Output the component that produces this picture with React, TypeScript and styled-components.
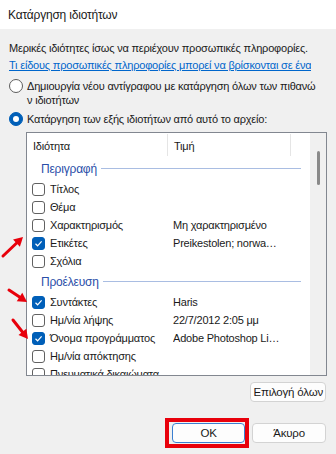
import styled, { createGlobalStyle } from "styled-components";

const GlobalStyle = createGlobalStyle`
  html, body {
    margin: 0;
    padding: 0;
    background: #f0f0f0;
  }
  body {
    font-family: "Liberation Sans", Arial, sans-serif;
    font-size: 11px;
    letter-spacing: -0.2px;
    line-height: 16px;
    color: #1a1a1a;
  }
`;

const Dialog = styled.div`
  position: relative;
  width: 336px;
  height: 454px;
  overflow: hidden;
  background: #f0f0f0;
`;

const TitleBar = styled.div`
  height: 29px;
  line-height: 30px;
  padding-left: 8px;
  background: #ffffff;
  font-size: 12px;
  color: #1a1a1a;
`;

const Content = styled.div`
  display: flex;
  flex-direction: column;
  padding: 11px 10px 0 9px;
`;

const Intro = styled.div`
  line-height: 16px;
  white-space: nowrap;
`;

const Link = styled.a`
  display: block;
  margin-top: 1px;
  line-height: 16px;
  color: #0066cc;
  text-decoration: underline;
  white-space: nowrap;
  overflow: hidden;
  width: 302px;
`;

const Option = styled.div<{ $top: number }>`
  display: flex;
  align-items: flex-start;
  gap: 4px;
  margin-top: ${({ $top }) => $top}px;
  line-height: 14px;
  white-space: nowrap;
`;

const Radio = styled.span<{ $on?: boolean }>`
  flex: none;
  box-sizing: border-box;
  width: 14px;
  height: 14px;
  border-radius: 50%;
  display: flex;
  align-items: center;
  justify-content: center;
  background: ${({ $on }) => ($on ? "#005fb8" : "#ffffff")};
  border: 1px solid ${({ $on }) => ($on ? "#005fb8" : "#5c5c5c")};
  &::after {
    content: "";
    display: ${({ $on }) => ($on ? "block" : "none")};
    width: 6px;
    height: 6px;
    border-radius: 50%;
    background: #ffffff;
  }
`;

const ListBox = styled.div`
  position: relative;
  display: flex;
  margin: 6px 0 0 17px;
  width: 301px;
  height: 244px;
  box-sizing: border-box;
  border: 1px solid #828790;
  background: #ffffff;
  overflow: hidden;
`;

const ListBody = styled.div`
  flex: 1;
  display: flex;
  flex-direction: column;
  overflow: hidden;
`;

const Scrollbar = styled.div`
  flex: none;
  width: 16px;
  background: #f0f0f0;
  display: flex;
  justify-content: center;
  padding-top: 18px;
  box-sizing: border-box;
`;

const Thumb = styled.div`
  width: 3px;
  height: 34px;
  border-radius: 2px;
  background: #8a8a8a;
`;

const HeaderRow = styled.div`
  display: grid;
  grid-template-columns: 141px 123px 1fr;
  height: 24px;
  flex: none;
`;

const HeaderCell = styled.div<{ $sep?: boolean }>`
  padding-left: 6px;
  line-height: 24px;
  border-right: ${({ $sep }) => ($sep ? "1px solid #e5e5e5" : "none")};
  margin-top: 1px;
  height: 22px;
`;

const GroupRow = styled.div`
  flex: none;
  height: 23px;
  display: flex;
  align-items: center;
  gap: 4px;
  padding: 0 9px 0 14px;
  color: #2a4ea8;
  font-size: 12px;
  &::after {
    content: "";
    flex: 1;
    height: 1px;
    background: #a9bde2;
  }
`;

const Row = styled.div`
  flex: none;
  height: 18px;
  display: grid;
  grid-template-columns: 146px 1fr;
  align-items: center;
  white-space: nowrap;
`;

const NameCell = styled.div`
  display: flex;
  align-items: center;
  gap: 5px;
  padding-left: 5px;
  overflow: hidden;
`;

const ValueCell = styled.div`
  overflow: hidden;
`;

const Check = styled.span<{ $on?: boolean }>`
  flex: none;
  box-sizing: border-box;
  width: 13px;
  height: 13px;
  border-radius: 3px;
  display: flex;
  align-items: center;
  justify-content: center;
  background: ${({ $on }) => ($on ? "#005fb8" : "#ffffff")};
  border: 1px solid ${({ $on }) => ($on ? "#005fb8" : "#616161")};
`;

const SelectAllRow = styled.div`
  display: flex;
  justify-content: flex-end;
  margin-top: 6px;
`;

const Button = styled.button<{ $primary?: boolean }>`
  box-sizing: border-box;
  height: 20px;
  padding: 0 2px;
  font-family: inherit;
  font-size: 11.5px;
  letter-spacing: inherit;
  line-height: 16px;
  color: #1a1a1a;
  background: #fdfdfd;
  border: 1px solid ${({ $primary }) => ($primary ? "#3a7fd0" : "#d3d3d3")};
  border-radius: 4px;
  cursor: pointer;
`;

const ActionRow = styled.div`
  display: flex;
  justify-content: flex-end;
  align-items: center;
  gap: 3px;
  margin-top: 16px;
`;

const Highlight = styled.span`
  display: inline-flex;
  border: 4px solid #e8000b;
  padding: 1px 0 1px 3px;
`;

const Arrow = styled.svg`
  position: absolute;
  left: 0;
  top: 0;
  overflow: visible;
`;

type Item = { name: string; value?: string; checked?: boolean };

const groups: { title: string; items: Item[] }[] = [
  {
    title: "Περιγραφή",
    items: [
      { name: "Τίτλος" },
      { name: "Θέμα" },
      { name: "Χαρακτηρισμός", value: "Μη χαρακτηρισμένο" },
      { name: "Ετικέτες", value: "Preikestolen; norwa…", checked: true },
      { name: "Σχόλια" },
    ],
  },
  {
    title: "Προέλευση",
    items: [
      { name: "Συντάκτες", value: "Haris", checked: true },
      { name: "Ημ/νία λήψης", value: "22/7/2012 2:05 μμ" },
      { name: "Όνομα προγράμματος", value: "Adobe Photoshop Li…", checked: true },
      { name: "Ημ/νία απόκτησης" },
      { name: "Πνευματικά δικαιώματα" },
    ],
  },
];

const Tick = () => (
  <svg width="9" height="9" viewBox="0 0 9 9">
    <path d="M1.5 4.8 L3.6 6.8 L7.6 2.4" fill="none" stroke="#fff" strokeWidth="1.2" />
  </svg>
);

// annotation arrow, tail (x1,y1) -> tip (x2,y2)
const RedArrow = ({ x1, y1, x2, y2 }: { x1: number; y1: number; x2: number; y2: number }) => {
  const a = Math.atan2(y2 - y1, x2 - x1);
  const len = 9;
  const w = 5;
  const bx = x2 - Math.cos(a) * len;
  const by = y2 - Math.sin(a) * len;
  const px = -Math.sin(a) * w;
  const py = Math.cos(a) * w;
  return (
    <Arrow width="1" height="1">
      <line x1={x1} y1={y1} x2={bx + Math.cos(a)} y2={by + Math.sin(a)} stroke="#e8000b" strokeWidth="3" strokeLinecap="round" />
      <polygon points={`${x2},${y2} ${bx + px},${by + py} ${bx - px},${by - py}`} fill="#e8000b" />
    </Arrow>
  );
};

export default function App() {
  return (
    <Dialog>
      <GlobalStyle />
      <TitleBar>Κατάργηση ιδιοτήτων</TitleBar>
      <Content>
        <Intro>Μερικές ιδιότητες ίσως να περιέχουν προσωπικές πληροφορίες.</Intro>
        <Link href="#">Τι είδους προσωπικές πληροφορίες μπορεί να βρίσκονται σε ένα αρχείο;</Link>
        <Option $top={6}>
          <Radio />
          <span>
            Δημιουργία νέου αντίγραφου με κατάργηση όλων των πιθανώ
            <br />ν ιδιοτήτων
          </span>
        </Option>
        <Option $top={5}>
          <Radio $on />
          <span>Κατάργηση των εξής ιδιοτήτων από αυτό το αρχείο:</span>
        </Option>
        <ListBox>
          <ListBody>
            <HeaderRow>
              <HeaderCell $sep>Ιδιότητα</HeaderCell>
              <HeaderCell $sep>Τιμή</HeaderCell>
              <HeaderCell />
            </HeaderRow>
            {groups.map((g) => (
              <div key={g.title}>
                <GroupRow>{g.title}</GroupRow>
                {g.items.map((it) => (
                  <Row key={it.name}>
                    <NameCell>
                      <Check $on={it.checked}>{it.checked && <Tick />}</Check>
                      {it.name}
                    </NameCell>
                    <ValueCell>{it.value}</ValueCell>
                  </Row>
                ))}
              </div>
            ))}
          </ListBody>
          <Scrollbar>
            <Thumb />
          </Scrollbar>
        </ListBox>
        <SelectAllRow>
          <Button>Επιλογή όλων</Button>
        </SelectAllRow>
        <ActionRow>
          <Highlight>
            <Button $primary style={{ width: 73 }}>OK</Button>
          </Highlight>
          <Button style={{ width: 74 }}>Άκυρο</Button>
        </ActionRow>
      </Content>
      <RedArrow x1={3} y1={256} x2={23} y2={237} />
      <RedArrow x1={9} y1={290} x2={27} y2={302} />
      <RedArrow x1={13} y1={320} x2={28} y2={339} />
    </Dialog>
  );
}
